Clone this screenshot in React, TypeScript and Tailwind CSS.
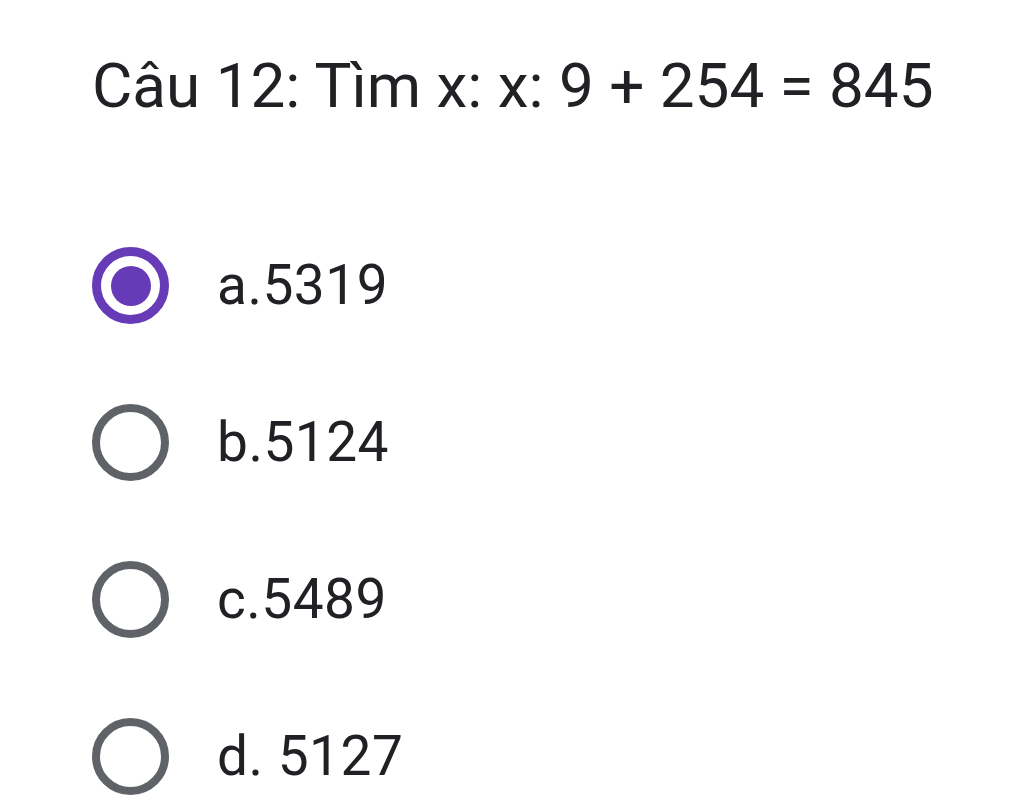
import React from "react";

const options = [
  { label: "a.5319", checked: true },
  { label: "b.5124", checked: false },
  { label: "c.5489", checked: false },
  { label: "d. 5127", checked: false },
];

export default function App() {
  return (
    <div
      className="w-[1024px] h-[812px] bg-white overflow-hidden pl-[92px] pt-[46px]"
      style={{ fontFamily: "Roboto, 'Noto Sans', sans-serif" }}
    >
      <div className="text-[62px] leading-[80px] text-[#202124]">
        Câu 12: Tìm x: x: 9 + 254 = 845
      </div>
      <div className="flex flex-col mt-[121px] gap-[80px]">
        {options.map((o) => (
          <div key={o.label} className="flex items-center h-[77px]">
            {o.checked ? (
              <div className="w-[77px] h-[77px] rounded-full border-[9px] border-[#673ab7] flex items-center justify-center">
                <div className="w-[40px] h-[40px] rounded-full bg-[#673ab7]" />
              </div>
            ) : (
              <div className="w-[77px] h-[77px] rounded-full border-[8px] border-[#5f6368]" />
            )}
            <span className="ml-[48px] text-[55px] text-[#202124] leading-none tracking-[0.5px]">
              {o.label}
            </span>
          </div>
        ))}
      </div>
    </div>
  );
}
